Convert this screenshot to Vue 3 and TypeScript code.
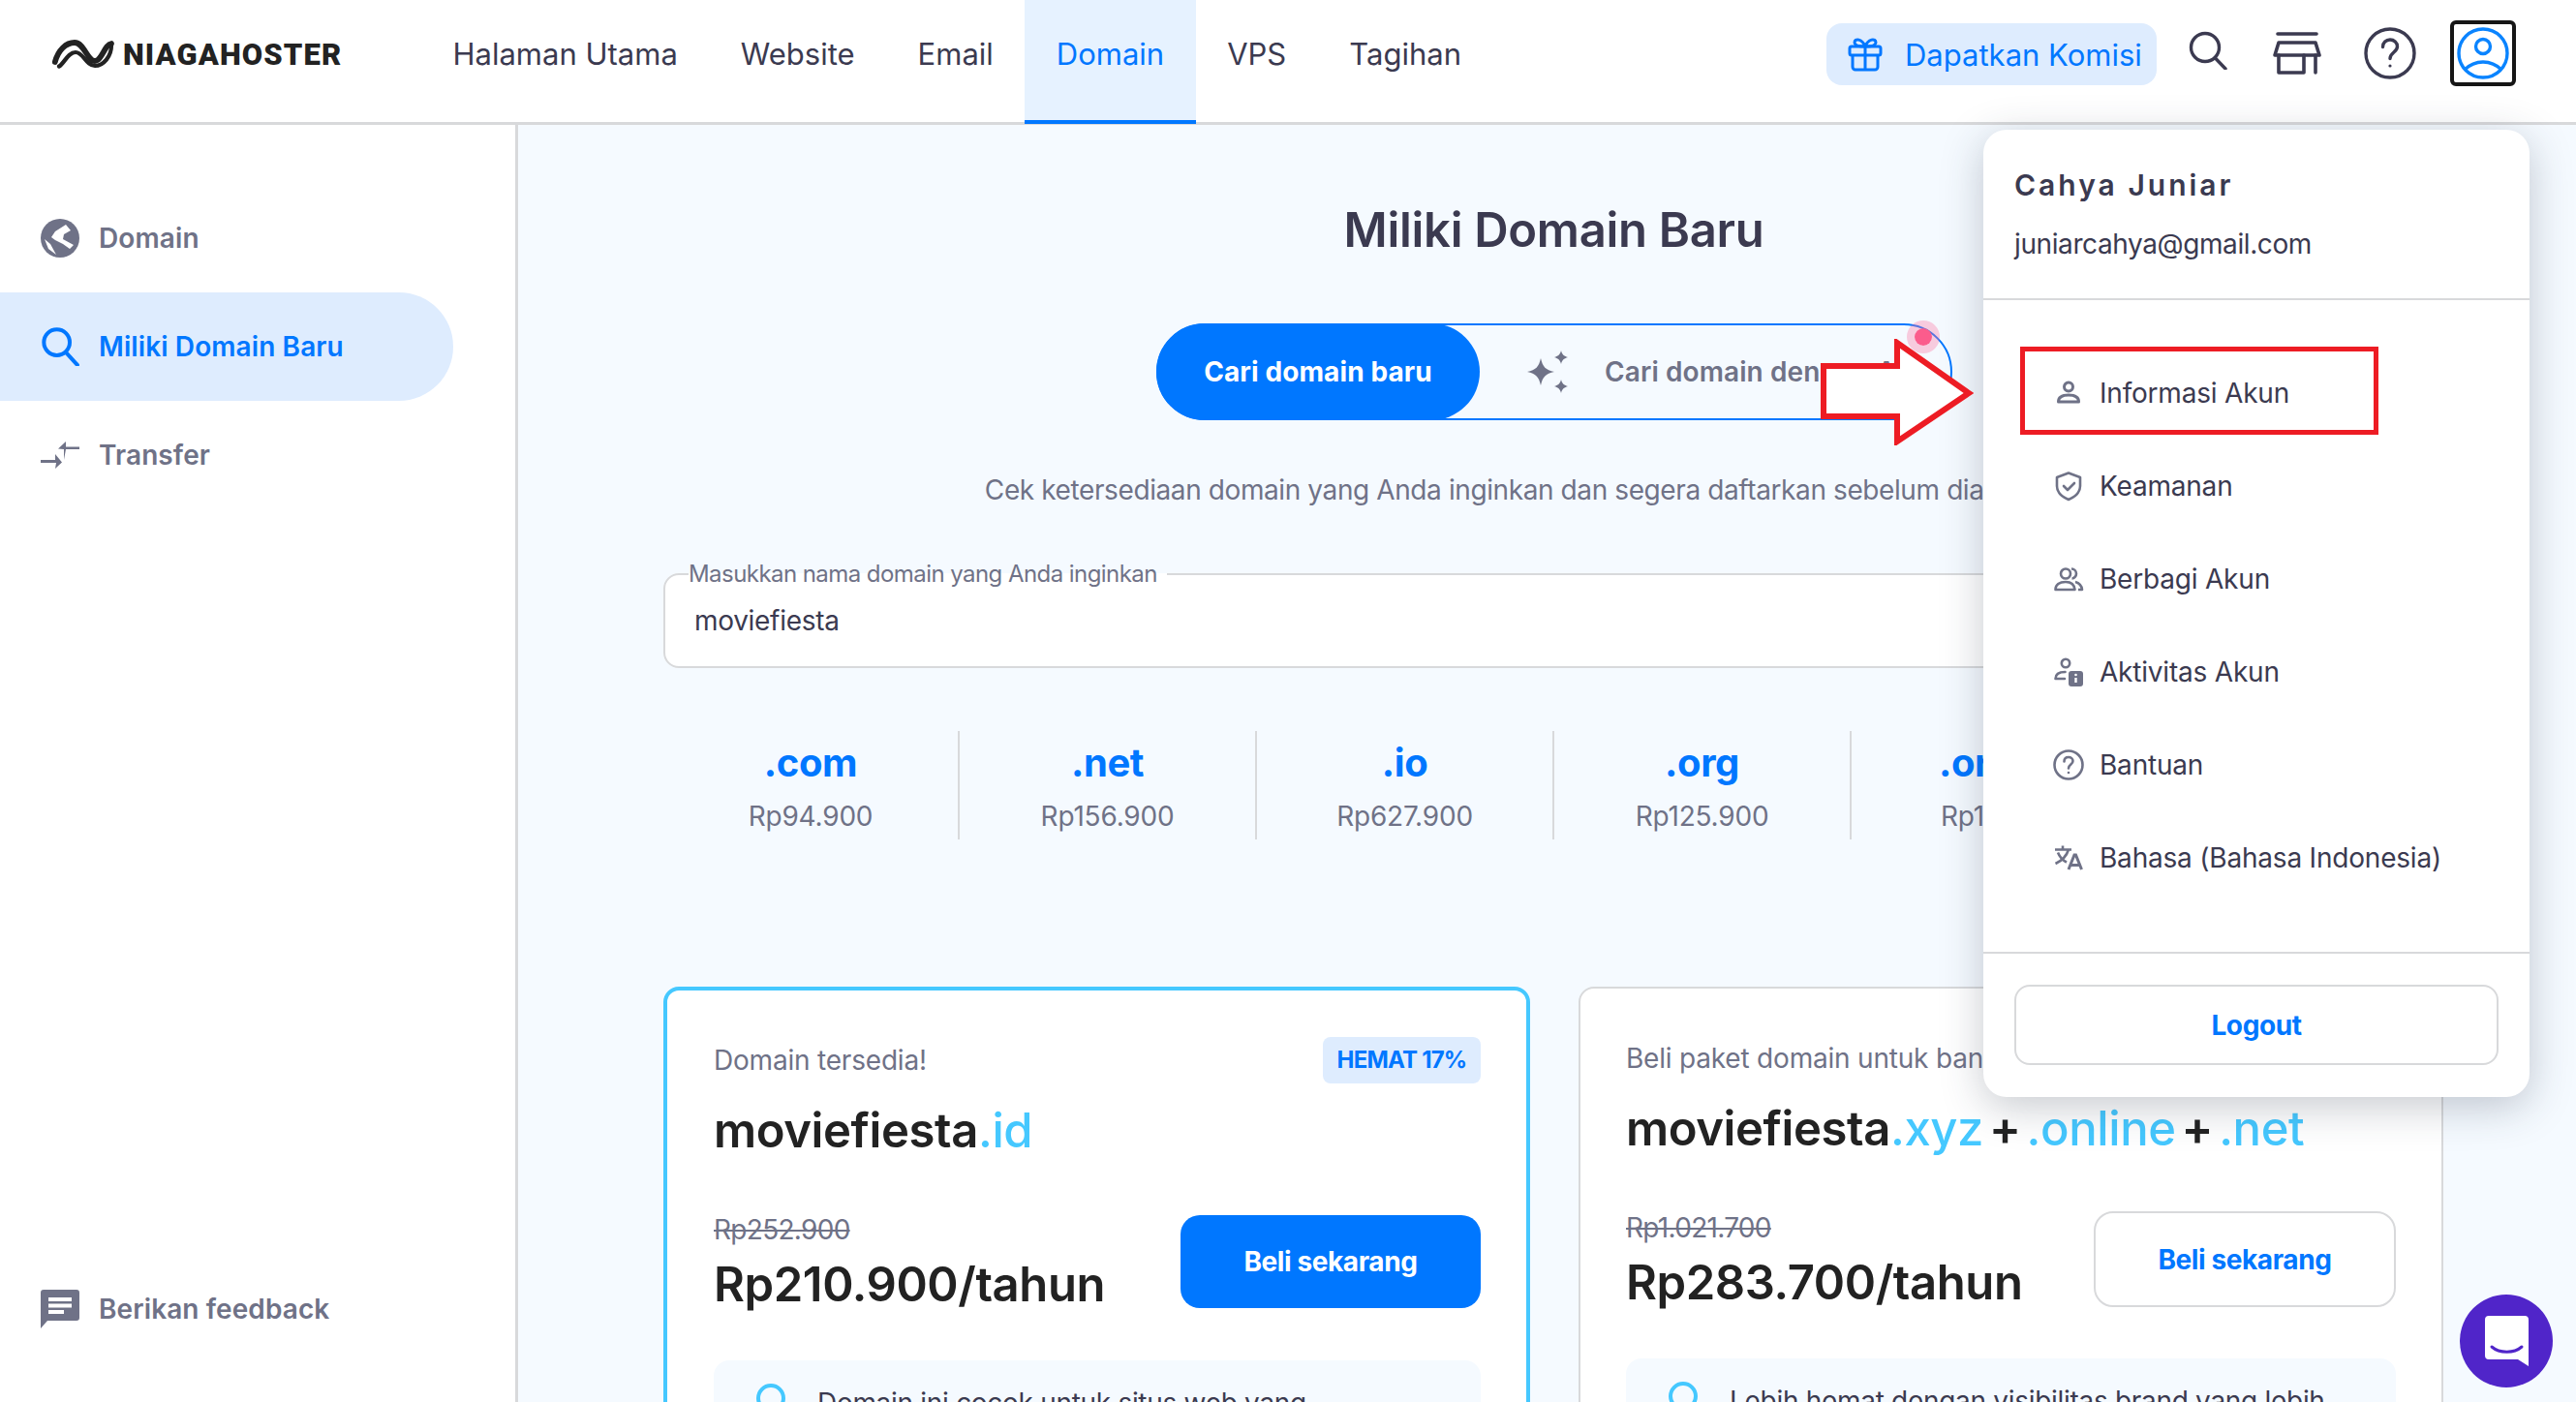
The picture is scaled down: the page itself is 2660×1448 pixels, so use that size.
<script setup lang="ts">
interface Tld { name: string; price: string }

const navItems = ['Halaman Utama', 'Website', 'Email', 'Domain', 'VPS', 'Tagihan']

const tlds: Tld[] = [
  { name: '.com', price: 'Rp94.900' },
  { name: '.net', price: 'Rp156.900' },
  { name: '.io', price: 'Rp627.900' },
  { name: '.org', price: 'Rp125.900' },
  { name: '.org.id', price: 'Rp19.900' },
  { name: '.online', price: 'Rp25.900' }
]
</script>

<template>
  <div class="page">
    <header class="topbar">
      <div class="brand">
        <svg class="brand-mark" viewBox="0 0 64 30" fill="none" stroke="#222" stroke-linecap="round">
          <path d="M2.800 23C6 11 14 3 23 3C33 3 36 22 44 22C51 22 54 5 61 4" stroke-width="5.800" />
          <path d="M7 27.500C12 25 16 13 24 13C32 13 35 27 44 27C53 27 61 17 61 6" stroke-width="4.200" />
        </svg>
        <span class="brand-name">NIAGAHOSTER</span>
      </div>
      <nav class="nav">
        <a v-for="item in navItems" :key="item" class="nav-item" :class="{ active: item === 'Domain' }">{{ item }}</a>
      </nav>
      <div class="top-actions">
        <button class="promo">
          <svg viewBox="0 0 36 36" fill="none" stroke="#0077ff" stroke-width="3" stroke-linejoin="round">
            <rect x="2" y="10" width="32" height="9" rx="2" />
            <path d="M5 19v12a3 3 0 0 0 3 3h20a3 3 0 0 0 3-3V19M18 10v24" />
            <path d="M18 10c-3-8-11-9-11-4 0 3 5 4 11 4Zm0 0c3-8 11-9 11-4 0 3-5 4-11 4Z" />
          </svg>
          <span>Dapatkan Komisi</span>
        </button>
        <svg class="act-search" viewBox="0 0 40 40" fill="none" stroke="#3b3a50" stroke-width="3.400" stroke-linecap="round">
          <circle cx="17" cy="17" r="14.500" />
          <path d="M27.500 28 38 39" />
        </svg>
        <svg class="act-store" viewBox="0 0 50 44" fill="none" stroke="#3b3a50" stroke-width="3.600" stroke-linecap="round" stroke-linejoin="round">
          <path d="M5 2h40" />
          <path d="M6 11h38l4 13H2Z" />
          <path d="M6 24v18h26V24M44 24v18" />
        </svg>
        <svg class="act-help" viewBox="0 0 54 54" fill="none" stroke="#3b3a50" stroke-width="3.400" stroke-linecap="round">
          <circle cx="27" cy="27" r="25" />
          <path d="M19.500 20.500c0-4.500 3.500-7.500 7.500-7.500s7.500 3 7.500 7c0 6-7.500 6-7.500 12.500" />
          <circle cx="27" cy="40" r="1.600" fill="#3b3a50" stroke="none" />
        </svg>
        <div class="avatar">
          <svg viewBox="0 0 54 54" fill="none" stroke="#0a84ff" stroke-width="3.400">
            <circle cx="27" cy="27" r="25" />
            <circle cx="27" cy="20" r="7.500" />
            <path d="M8 44c5-5 12-8 19-8s14 3 19 8" />
          </svg>
        </div>
      </div>
    </header>

    <div class="body">
      <aside class="sidebar">
        <ul class="side-list">
          <li class="side-item">
            <svg viewBox="0 0 40 40">
              <circle cx="20" cy="20" r="20" fill="#6f7287" />
              <path d="M15 13 26 6l5 6-7 4-1 5 11 6-4 4-7-5-8-4-4-3ZM4 21l6 5 6 11-8-6Z" fill="#fff" />
            </svg>
            <span>Domain</span>
          </li>
          <li class="side-item current">
            <svg viewBox="0 0 36 36" fill="none" stroke="#0077ff" stroke-width="3.600" stroke-linecap="square">
              <circle cx="15" cy="14" r="12" />
              <path d="M24 24 34 35" />
            </svg>
            <span>Miliki Domain Baru</span>
          </li>
          <li class="side-item">
            <svg viewBox="0 0 40 28" fill="#6f7287">
              <path d="M40 5.500H26V0l-8 7.500 6 0.500v11L26 8h14Z" />
              <path d="M0 19h15v-6l7 8.500L15 28l1-6H0Z" />
            </svg>
            <span>Transfer</span>
          </li>
        </ul>
        <div class="side-item feedback">
          <svg viewBox="0 0 40 40">
            <path d="M3 0h34a3 3 0 0 1 3 3v26a3 3 0 0 1-3 3H7l-7 8V3a3 3 0 0 1 3-3Z" fill="#6f7287" />
            <path d="M8 8h24v4H8zM8 14.500h24v4H8zM8 21h16v4H8z" fill="#fff" />
          </svg>
          <span>Berikan feedback</span>
        </div>
      </aside>

      <main class="main">
        <h1 class="title">Miliki Domain Baru</h1>

        <div class="mode-wrap">
          <div class="mode">
            <button class="mode-on">Cari domain baru</button>
            <div class="mode-off">
              <svg viewBox="0 0 44 44" fill="#6f7287">
                <path d="M15 8c2 9 5 12 14 14-9 2-12 5-14 14-2-9-5-12-14-14 9-2 12-5 14-14Z" />
                <path d="M36 0c1 4 2.500 5.500 7 7-4.500 1.500-6 3-7 7-1-4-2.500-5.500-7-7 4.500-1.500 6-3 7-7ZM36 30c1 4 2.500 5.500 7 7-4.500 1.500-6 3-7 7-1-4-2.500-5.500-7-7 4.500-1.500 6-3 7-7Z" />
              </svg>
              <span>Cari domain dengan AI</span>
            </div>
            <span class="pulse"></span>
          </div>
        </div>

        <p class="lead">Cek ketersediaan domain yang Anda inginkan dan segera daftarkan sebelum diambil orang.</p>

        <fieldset class="search-field">
          <legend>Masukkan nama domain yang Anda inginkan</legend>
          <span>moviefiesta</span>
        </fieldset>

        <div class="tlds">
          <div v-for="tld in tlds" :key="tld.name" class="tld">
            <strong>{{ tld.name }}</strong>
            <span>{{ tld.price }}</span>
          </div>
        </div>

        <div class="cards">
          <section class="card featured">
            <div class="card-top">
              <span class="card-note">Domain tersedia!</span>
              <span class="badge">HEMAT 17%</span>
            </div>
            <h2 class="card-name">moviefiesta<em>.id</em></h2>
            <div class="card-buy">
              <div>
                <s class="old">Rp252.900</s>
                <div class="price">Rp210.900/tahun</div>
              </div>
              <button class="buy solid">Beli sekarang</button>
            </div>
            <div class="info">
              <span class="ring"></span>
              <span>Domain ini cocok untuk situs web yang</span>
            </div>
          </section>

          <section class="card">
            <div class="card-top">
              <span class="card-note">Beli paket domain untuk bangun brand Anda</span>
            </div>
            <h2 class="card-name">moviefiesta<em>.xyz</em> <i>+</i> <em>.online</em> <i>+</i> <em>.net</em></h2>
            <div class="card-buy">
              <div>
                <s class="old">Rp1.021.700</s>
                <div class="price">Rp283.700/tahun</div>
              </div>
              <button class="buy outline">Beli sekarang</button>
            </div>
            <div class="info">
              <span class="ring"></span>
              <span>Lebih hemat dengan visibilitas brand yang lebih</span>
            </div>
          </section>
        </div>
      </main>
    </div>

    <div class="account-menu">
      <div class="account-head">
        <div class="account-name">Cahya Juniar</div>
        <div class="account-mail">juniarcahya@gmail.com</div>
      </div>
      <ul class="account-list">
        <li>
          <svg viewBox="-3 -3 30 30" fill="none" stroke="#6f7287" stroke-width="3">
            <circle cx="12" cy="5.500" r="4.500" />
            <path d="M1.500 21c0-5 4.500-7 10.500-7s10.500 2 10.500 7Z" stroke-linejoin="round" />
          </svg>
          Informasi Akun
        </li>
        <li>
          <svg viewBox="0 0 28 30" fill="none" stroke="#6f7287" stroke-width="2.600" stroke-linejoin="round" stroke-linecap="round">
            <path d="M14 1.500 26 6v9c0 7-5 11-12 14C7 26 2 22 2 15V6Z" />
            <path d="m9 15 4 4 7-7" />
          </svg>
          Keamanan
        </li>
        <li>
          <svg viewBox="0 0 30 24" fill="none" stroke="#6f7287" stroke-width="2.600" stroke-linejoin="round">
            <circle cx="12" cy="6.500" r="5" />
            <path d="M1.500 23c0-5 4-8 10.500-8s9 3 9.500 8Z" />
            <path d="M18 1.500c3 0 5 2.500 5 5s-2 5-4.500 5M22 15c4 1 6.500 4 7 8h-4" />
          </svg>
          Berbagi Akun
        </li>
        <li>
          <svg viewBox="0 0 30 30" fill="none" stroke="#6f7287" stroke-width="2.600" stroke-linecap="round">
            <circle cx="12" cy="6" r="4.200" />
            <path d="M1.500 22c0-5 4-7 10-7M1.500 22H11" />
            <rect x="15" y="14" width="15" height="16" rx="3" fill="#6f7287" stroke="none" />
            <path d="M22.500 21v5" stroke="#fff" stroke-width="2.400" stroke-linecap="butt" />
            <circle cx="22.500" cy="18" r="1.300" fill="#fff" stroke="none" />
          </svg>
          Aktivitas Akun
        </li>
        <li>
          <svg viewBox="1 1 30 30" fill="none" stroke="#6f7287" stroke-width="2.600" stroke-linecap="round">
            <circle cx="16" cy="16" r="14.500" />
            <path d="M11.500 12.500c0-3 2-4.500 4.500-4.500s4.500 1.700 4.500 4c0 3.500-4.500 3.500-4.500 7.500" />
            <circle cx="16" cy="24" r="1.300" fill="#6f7287" stroke="none" />
          </svg>
          Bantuan
        </li>
        <li>
          <svg viewBox="0 0 30 26" fill="none" stroke="#6f7287" stroke-width="2.600">
            <path d="M1 4.500h17M9 0.500v4M15 4.500C13 11 8 16 1.500 19M4 7.500c2 5 5 8 9 10" />
            <path d="m15 25 6-15h1.500l6 15M17 20.500h10" stroke-width="3" />
          </svg>
          Bahasa (Bahasa Indonesia)
        </li>
      </ul>
      <span class="account-mark"></span>
      <div class="account-foot">
        <button class="logout">Logout</button>
      </div>
    </div>

    <svg class="pointer" viewBox="0 0 158 110" fill="#fff" stroke="#ed1c24" stroke-width="6" stroke-linejoin="miter">
      <path d="M3 28h76V4l74 52-74 50V80H3Z" />
    </svg>

    <button class="chat">
      <svg viewBox="0 0 45 52">
        <path d="M4 0h37a4 4 0 0 1 4 4v48l-11-7H4a4 4 0 0 1-4-4V4a4 4 0 0 1 4-4Z" fill="#fff" />
        <path d="M7 32c8 7 23 7 31 0" fill="none" stroke="#5025c9" stroke-width="3" stroke-linecap="round" />
      </svg>
    </button>
  </div>
</template>

<style>
html,
body {
  margin: 0;
  background: #fff;
}
</style>

<style scoped>
.page {
  position: relative;
  display: flex;
  flex-direction: column;
  width: 2660px;
  height: 1448px;
  overflow: hidden;
  font-family: Inter, "Noto Sans", sans-serif;
  color: #3b3a50;
  background: #fff;
}

button {
  font-family: inherit;
  cursor: pointer;
}

.topbar {
  display: flex;
  align-items: center;
  flex: none;
  box-sizing: content-box;
  height: 126px;
  padding-left: 54px;
  border-bottom: 3px solid #d8d9db;
  background: #fff;
}

.brand {
  display: flex;
  align-items: center;
  gap: 9px;
  width: 381px;
  margin-top: -14px;
}

.brand-mark {
  width: 64px;
  height: 30px;
}

.brand-name {
  font-family: Roboto, sans-serif;
  font-size: 31px;
  font-weight: 900;
  letter-spacing: 1.1px;
  color: #222;
}

.nav {
  display: flex;
  align-self: stretch;
  margin-bottom: -2px;
}

.nav-item {
  display: flex;
  align-items: center;
  padding: 0 32.500px 14px;
  font-size: 31px;
  font-weight: 400;
  color: #3b3a50;
  border-bottom: 4px solid transparent;
}

.nav-item.active {
  color: #0077ff;
  background: #e6f2ff;
  border-bottom-color: #0077ff;
}

.top-actions {
  display: flex;
  align-items: center;
  margin-left: auto;
  padding-right: 62px;
}

.promo {
  display: flex;
  align-items: center;
  gap: 23px;
  width: 341px;
  height: 64px;
  padding: 0 0 0 22px;
  margin-top: -14px;
  border: 0;
  border-radius: 16px;
  font-size: 31px;
  color: #0077ff;
  background: #deecfe;
  white-space: nowrap;
}

.promo svg {
  flex: none;
  width: 36px;
  height: 36px;
}

.act-search {
  width: 40px;
  height: 40px;
  margin: -22px 0 0 33px;
}

.act-store {
  width: 50px;
  height: 44px;
  margin: -16px 0 0 47px;
}

.act-help {
  width: 54px;
  height: 54px;
  margin: -16px 0 0 44px;
}

.avatar {
  box-sizing: border-box;
  width: 68px;
  height: 68px;
  margin: -16px 0 0 35px;
  padding: 3px 3px;
  border: 4px solid #161616;
  border-radius: 6px;
}

.avatar svg {
  display: block;
  width: 54px;
  height: 54px;
}

.body {
  display: flex;
  flex: 1;
  min-height: 0;
}

.sidebar {
  display: flex;
  flex-direction: column;
  flex: none;
  box-sizing: border-box;
  width: 535px;
  padding: 61px 64px 76px 0;
  border-right: 3px solid #d8d9db;
  background: #fff;
}

.side-list {
  flex: 1;
  margin: 0;
  padding: 0;
  list-style: none;
}

.side-item {
  display: flex;
  align-items: center;
  gap: 20px;
  height: 112px;
  padding-left: 42px;
  font-size: 28px;
  font-weight: 600;
  letter-spacing: 0.1px;
  color: #6f7287;
}

.side-item svg {
  flex: none;
  width: 40px;
  height: 40px;
}

.side-item.current {
  color: #0077ff;
  background: #deecfe;
  border-radius: 0 56px 56px 0;
}

.feedback {
  height: 40px;
}

.main {
  flex: 1;
  min-width: 0;
  padding: 0 136px 0 150px;
  background: #f5faff;
}

.title {
  margin: 81px 0 0;
  font-size: 49px;
  line-height: 56px;
  font-weight: 600;
  letter-spacing: -0.3px;
  text-align: center;
  color: #3b3a50;
}

.mode-wrap {
  display: flex;
  justify-content: center;
  margin-top: 68px;
  padding-left: 1px;
}

.mode {
  position: relative;
  display: flex;
  box-sizing: border-box;
  width: 822px;
  height: 100px;
  border: 2px solid #0077ff;
  border-radius: 50px;
}

.mode-on {
  flex: none;
  width: 334px;
  height: 100px;
  margin: -2px 0 0 -2px;
  border: 0;
  border-radius: 50px;
  font-size: 28px;
  font-weight: 700;
  letter-spacing: 0.1px;
  color: #fff;
  background: #0077ff;
}

.mode-off {
  display: flex;
  align-items: center;
  gap: 37px;
  padding-left: 48px;
  font-size: 28px;
  font-weight: 600;
  letter-spacing: 0.1px;
  color: #6f7287;
  white-space: nowrap;
}

.mode-off svg {
  flex: none;
  width: 44px;
  height: 44px;
}

.pulse {
  position: absolute;
  top: -5px;
  right: 11px;
  box-sizing: content-box;
  width: 18px;
  height: 18px;
  border: 8px solid rgba(251, 114, 160, 0.35);
  border-radius: 50%;
  background: #fb5c8c;
  background-clip: padding-box;
}

.lead {
  margin: 52px 0 0;
  font-size: 28px;
  line-height: 40px;
  letter-spacing: -0.4px;
  text-align: center;
  white-space: nowrap;
  color: #6f7287;
}

.search-field {
  box-sizing: border-box;
  height: 111px;
  margin: 53px 0 0;
  padding: 0 16px 0 30px;
  border: 2px solid #d8d9db;
  border-radius: 16px;
  background: #fff;
  font-size: 28px;
  color: #3b3a50;
}

.search-field legend {
  margin-left: -6px;
  padding: 0 10px 0 0;
  font-size: 24px;
  line-height: 28px;
  letter-spacing: -0.56px;
  color: #6f7287;
}

.search-field span {
  display: block;
  margin-top: 14px;
  line-height: 40px;
  letter-spacing: -0.3px;
}

.tlds {
  display: grid;
  grid-template-columns: 306px repeat(5, 307px);
  height: 112px;
  margin-top: 65px;
}

.tld {
  display: flex;
  flex-direction: column;
  align-items: center;
  border-right: 2px solid #d8d9db;
}

.tld:last-child {
  border-right: 0;
}

.tld strong {
  margin-top: 8px;
  font-size: 40px;
  line-height: 50px;
  font-weight: 700;
  letter-spacing: -0.4px;
  color: #0077ff;
}

.tld span {
  margin-top: 10px;
  font-size: 28px;
  line-height: 40px;
  letter-spacing: -0.2px;
  color: #6f7287;
}

.cards {
  display: grid;
  grid-template-columns: 895px 893px;
  gap: 50px;
  margin-top: 152px;
}

.card {
  box-sizing: border-box;
  height: 500px;
  padding: 48px 47px;
  border: 2px solid #d8d9db;
  border-radius: 16px;
  background: #fff;
}

.card.featured {
  padding-left: 48px;
  padding-right: 47px;
  border: 4px solid #45c8ff;
}

.card-top {
  display: flex;
  align-items: center;
  justify-content: space-between;
  height: 48px;
}

.card-note {
  font-size: 28px;
  letter-spacing: -0.2px;
  color: #6f7287;
  white-space: nowrap;
}

.badge {
  box-sizing: border-box;
  width: 163px;
  height: 48px;
  border-radius: 8px;
  font-size: 24px;
  font-weight: 700;
  line-height: 48px;
  letter-spacing: -0.8px;
  text-align: center;
  color: #0077ff;
  background: #deecfe;
}

.card-name {
  margin: 21px 0 0;
  font-size: 49px;
  line-height: 56px;
  font-weight: 600;
  letter-spacing: -0.4px;
  word-spacing: -6px;
  color: #222;
  white-space: nowrap;
}

.card-name em {
  font-style: normal;
  font-weight: 500;
  color: #45c8ff;
}

.card-name i {
  font-style: normal;
}

.card-buy {
  display: flex;
  align-items: center;
  justify-content: space-between;
  margin-top: 54px;
}

.old {
  display: block;
  font-size: 28px;
  line-height: 40px;
  letter-spacing: -0.7px;
  color: #6f7287;
}

.price {
  margin-top: 9px;
  font-size: 49px;
  line-height: 56px;
  font-weight: 600;
  letter-spacing: -0.4px;
  color: #222;
}

.buy {
  box-sizing: border-box;
  height: 96px;
  border-radius: 20px;
  font-size: 28px;
  font-weight: 700;
  letter-spacing: -0.4px;
}

.buy.solid {
  width: 310px;
  border: 0;
  color: #fff;
  background: #0077ff;
}

.buy.outline {
  width: 312px;
  height: 99px;
  border: 2px solid #d8d9db;
  color: #0077ff;
  background: #fff;
}

.info {
  display: flex;
  gap: 33px;
  box-sizing: border-box;
  height: 120px;
  margin-top: 50px;
  padding: 24px 44px;
  border-radius: 16px;
  font-size: 28px;
  line-height: 40px;
  letter-spacing: -0.3px;
  color: #3b3a50;
  background: #f5faff;
}

.ring {
  flex: none;
  box-sizing: border-box;
  width: 30px;
  height: 30px;
  border: 4px solid #45c8ff;
  border-radius: 50%;
}

.account-menu {
  position: absolute;
  top: 134px;
  left: 2048px;
  z-index: 3;
  box-sizing: border-box;
  width: 564px;
  height: 999px;
  border-radius: 24px;
  background: #fff;
  box-shadow: 0 10px 44px rgba(40, 50, 70, 0.26);
}

.account-head {
  box-sizing: border-box;
  height: 176px;
  padding: 32px 32px 0;
  border-bottom: 2px solid #d8d9db;
}

.account-name {
  font-size: 30px;
  line-height: 50px;
  font-weight: 600;
  letter-spacing: 3px;
  color: #3b3a50;
}

.account-mail {
  margin-top: 16px;
  font-size: 28px;
  line-height: 40px;
  letter-spacing: -0.4px;
  color: #3b3a50;
}

.account-list {
  margin: 0;
  padding: 48px 0 0 73px;
  list-style: none;
}

.account-list li {
  display: flex;
  align-items: center;
  gap: 17px;
  height: 96px;
  font-size: 28px;
  letter-spacing: -0.2px;
  color: #3b3a50;
}

.account-list svg {
  flex: none;
  width: 30px;
  height: 30px;
  overflow: visible;
}

.account-mark {
  position: absolute;
  top: 224px;
  left: 38px;
  box-sizing: border-box;
  width: 370px;
  height: 91px;
  border: 5px solid #ed1c24;
}

.account-foot {
  position: absolute;
  left: 0;
  right: 0;
  bottom: 0;
  box-sizing: border-box;
  height: 150px;
  padding: 32px 32px 0;
  border-top: 2px solid #d8d9db;
}

.logout {
  width: 100%;
  height: 83px;
  border: 2px solid #d8d9db;
  border-radius: 16px;
  font-size: 28px;
  font-weight: 700;
  letter-spacing: -0.4px;
  color: #0077ff;
  background: #fff;
}

.pointer {
  position: absolute;
  top: 350px;
  left: 1880px;
  z-index: 4;
  width: 158px;
  height: 110px;
}

.chat {
  position: absolute;
  top: 1337px;
  left: 2540px;
  z-index: 2;
  display: flex;
  align-items: center;
  justify-content: center;
  width: 96px;
  height: 96px;
  padding: 0;
  border: 0;
  border-radius: 50%;
  background: #5025c9;
}

.chat svg {
  width: 45px;
  height: 52px;
}
</style>
